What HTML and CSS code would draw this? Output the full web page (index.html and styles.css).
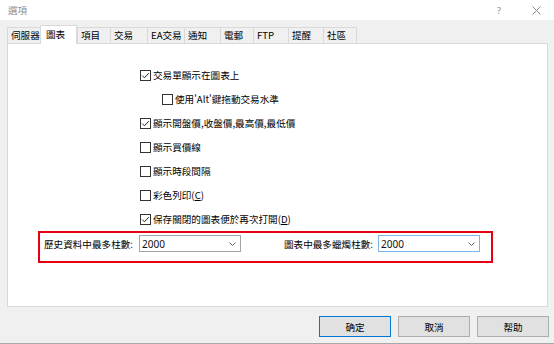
FILE: index.html
```html
<!DOCTYPE html>
<html lang="zh-Hant">
<head>
<meta charset="utf-8">
<title>選項</title>
<link rel="stylesheet" href="styles.css">
</head>
<body>
<div class="window">
  <div class="titlebar">
    <span class="title">選項</span>
    <span class="help">?</span>
    <span class="close"><svg width="9" height="9" viewBox="0 0 9 9"><path d="M0.5 0.5 L8.5 8.5 M8.5 0.5 L0.5 8.5" stroke="#8a8a8a" stroke-width="1" fill="none"/></svg></span>
  </div>
  <div class="tabs">
    <div class="tab">伺服器</div>
    <div class="tab active">圖表</div>
    <div class="tab">項目</div>
    <div class="tab">交易</div>
    <div class="tab">EA交易</div>
    <div class="tab">通知</div>
    <div class="tab">電郵</div>
    <div class="tab">FTP</div>
    <div class="tab">提醒</div>
    <div class="tab">社區</div>
  </div>
  <div class="panel">
    <div class="options">
      <div class="row"><span class="cb"><svg width="9" height="9" viewBox="0 0 9 9"><polyline points="1.2,4.6 3.4,6.8 7.8,2.2" fill="none" stroke="#222" stroke-width="1"/></svg></span><span>交易單顯示在圖表上</span></div>
      <div class="row indent"><span class="cb"></span><span>使用'Alt'鍵拖動交易水準</span></div>
      <div class="row"><span class="cb"><svg width="9" height="9" viewBox="0 0 9 9"><polyline points="1.2,4.6 3.4,6.8 7.8,2.2" fill="none" stroke="#222" stroke-width="1"/></svg></span><span>顯示開盤價,收盤價,最高價,最低價</span></div>
      <div class="row"><span class="cb"></span><span>顯示買價線</span></div>
      <div class="row"><span class="cb"></span><span>顯示時段間隔</span></div>
      <div class="row"><span class="cb"></span><span>彩色列印(<u>C</u>)</span></div>
      <div class="row"><span class="cb"><svg width="9" height="9" viewBox="0 0 9 9"><polyline points="1.2,4.6 3.4,6.8 7.8,2.2" fill="none" stroke="#222" stroke-width="1"/></svg></span><span>保存關閉的圖表便於再次打開(<u>D</u>)</span></div>
    </div>
    <div class="highlight">
      <div class="field">
        <span class="label">歷史資料中最多柱數:</span>
        <div class="select"><span>2000</span><svg width="7" height="4" viewBox="0 0 7 4"><polyline points="0.5,0.5 3.5,3.5 6.5,0.5" fill="none" stroke="#606060" stroke-width="1"/></svg></div>
      </div>
      <div class="field field-right">
        <span class="label">圖表中最多蠟燭柱數:</span>
        <div class="select focused"><span>2000</span><svg width="7" height="4" viewBox="0 0 7 4"><polyline points="0.5,0.5 3.5,3.5 6.5,0.5" fill="none" stroke="#606060" stroke-width="1"/></svg></div>
      </div>
    </div>
  </div>
  <div class="buttons">
    <div class="btn default">确定</div>
    <div class="btn">取消</div>
    <div class="btn">帮助</div>
  </div>
</div>
</body>
</html>
```

FILE: styles.css
```css
* { box-sizing: border-box; }

body {
  margin: 0;
  background: #f0f0f0;
  font-family: "Noto Sans CJK TC", "Noto Sans CJK SC", sans-serif;
  font-size: 9.6px;
  color: #000;
}

.window {
  width: 554px;
  height: 344px;
  display: flex;
  flex-direction: column;
  border-bottom: 1px solid #a8a8a8;
  overflow: hidden;
}

.titlebar {
  height: 20px;
  flex: none;
  background: #fff;
  display: flex;
  align-items: center;
  padding: 0 13px 0 8px;
  color: #8c8c8c;
}

.title { flex: 1; }

.help {
  font-family: "Noto Sans", sans-serif;
  font-size: 9px;
  margin-right: 31px;
}

.close { display: flex; }

.tabs {
  display: grid;
  grid-template-columns: 33px 37px 33px 37px 37px 36px 33px 35px 35px 34px;
  align-items: end;
  height: 18px;
  margin: 5px 0 0 7px;
  flex: none;
  position: relative;
  z-index: 1;
}

.tab {
  height: 16px;
  line-height: 15px;
  padding-left: 3px;
  border: 1px solid #d9d9d9;
  border-right: none;
  border-bottom: none;
  background: #f0f0f0;
  white-space: nowrap;
}

.tab:last-child { border-right: 1px solid #d9d9d9; }

.tab.active {
  height: 19px;
  margin-bottom: -1px;
  line-height: 16px;
  padding-left: 5px;
  background: #fff;
  border-right: 1px solid #d9d9d9;
}

.panel {
  flex: none;
  height: 264px;
  margin: 0 6px 0 7px;
  padding-top: 19px;
  background: #fff;
  border: 1px solid #d9d9d9;
}

.options { padding-left: 132px; }

.row {
  display: flex;
  align-items: center;
  gap: 2px;
  height: 24px;
  white-space: nowrap;
}

.row.indent { padding-left: 22px; }

.cb {
  width: 11px;
  height: 11px;
  flex: none;
  border: 1px solid #333;
  background: #fff;
  display: flex;
  align-items: center;
  justify-content: center;
}

u { text-underline-offset: 1px; }

.highlight {
  width: 455px;
  height: 32px;
  margin-left: 30px;
  border: 2px solid #e60012;
  display: flex;
  justify-content: space-between;
  align-items: flex-start;
  padding: 2px 11px 0 4px;
}

.field {
  display: flex;
  align-items: center;
  gap: 6px;
  height: 17px;
}

.field-right { gap: 5px; }

.label { white-space: nowrap; }

.select {
  width: 102px;
  height: 17px;
  border: 1px solid #a5a5a5;
  background: #fff;
  display: flex;
  align-items: center;
  justify-content: space-between;
  padding: 0 4px 0 2px;
  font-family: "Noto Sans", sans-serif;
  font-size: 10px;
  color: #111;
}

.select.focused { border-color: #7eb4ea; }

.buttons {
  display: flex;
  justify-content: flex-end;
  gap: 7px;
  padding: 9px 5px 0 0;
}

.btn {
  width: 72px;
  height: 21px;
  background: #e1e1e1;
  border: 1px solid #adadad;
  display: flex;
  align-items: center;
  justify-content: center;
}

.btn.default { border-color: #0078d7; }
```
